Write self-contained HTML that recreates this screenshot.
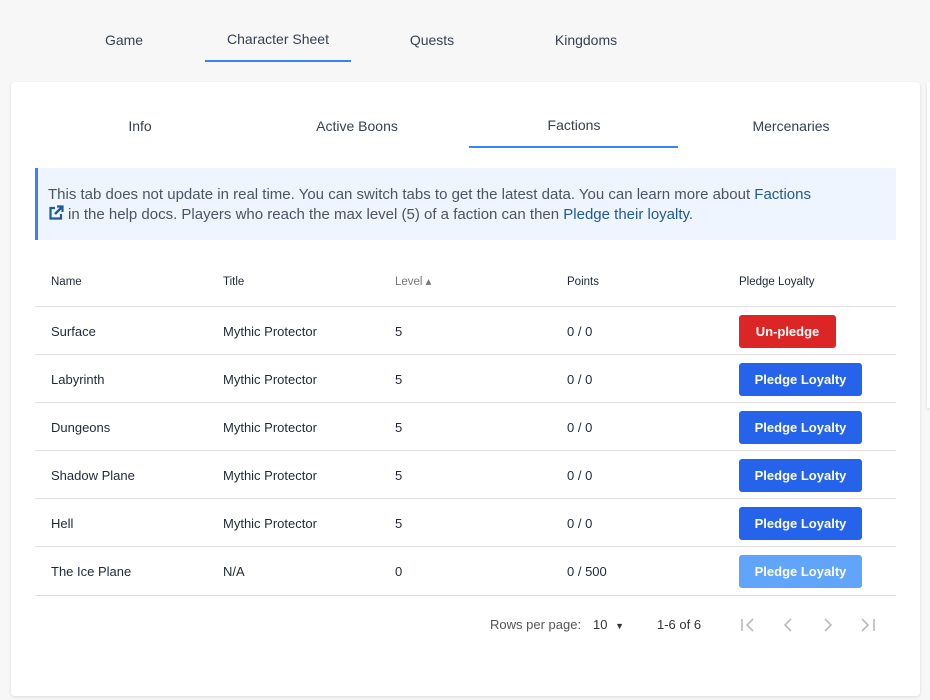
<!DOCTYPE html>
<html><head><style>
*{box-sizing:border-box;margin:0;padding:0}
body{width:930px;height:700px;background:#f7f7f7;font-family:"Liberation Sans",sans-serif;color:#374151;position:relative;overflow:hidden}
.abs{position:absolute}
.tt{position:absolute;font-size:14px;color:#374151;transform:translateX(-50%);white-space:nowrap}
.card{position:absolute;left:11px;top:82px;width:909px;height:614px;background:#fff;border-radius:4px;box-shadow:0 1px 3px rgba(0,0,0,.12)}
.side{position:absolute;left:927px;top:82px;width:10px;height:326px;background:#fff;box-shadow:0 1px 3px rgba(0,0,0,.12)}
.alert{position:absolute;left:35px;top:168px;width:861px;height:72px;background:#eef5fe;border-left:3px solid #3b82f6;padding:17px 0 0 10px;font-size:15px;line-height:20px;color:#4b5563}
.alert a{color:#1e5a96;text-decoration:none}
.row{position:absolute;left:35px;width:861px;height:48px;border-bottom:1px solid #e0e0e0;font-size:13px;color:#1f2937}
.row span{position:absolute;top:17px}
.hd span{font-size:11.5px;color:#1f2937;line-height:14px;top:16px}
.btn{position:absolute;top:8px;height:33px;border-radius:3px;color:#fff;font-weight:bold;font-size:13px;text-align:center;line-height:33px;left:704px}
.pg{position:absolute;top:617px;font-size:13px;color:#555}
</style></head><body>
<div class="tt" style="left:124px;top:32px">Game</div>
<div class="tt" style="left:278px;top:31px">Character Sheet</div>
<div class="abs" style="left:205px;top:60px;width:146px;height:2px;background:#3b82f6"></div>
<div class="tt" style="left:432px;top:32px">Quests</div>
<div class="tt" style="left:586px;top:32px">Kingdoms</div>
<div class="side"></div>
<div class="card"></div>
<div class="tt" style="left:140px;top:118px">Info</div>
<div class="tt" style="left:357px;top:118px">Active Boons</div>
<div class="tt" style="left:574px;top:117px">Factions</div>
<div class="abs" style="left:469px;top:146px;width:209px;height:2px;background:#3b82f6"></div>
<div class="tt" style="left:791px;top:118px">Mercenaries</div>
<div class="alert">This tab does not update in real time. You can switch tabs to get the latest data. You can learn more about <a>Factions</a><br><svg width="16" height="16" viewBox="0 0 16 16" style="vertical-align:-2px;margin-right:4px"><path d="M7 3H2.5v10.5H13V9" fill="none" stroke="#1e5a96" stroke-width="2.2"/><path d="M9 1.5h5.5V7" fill="none" stroke="#1e5a96" stroke-width="2.2"/><path d="M14 2L7 9" stroke="#1e5a96" stroke-width="2.4"/></svg>in the help docs. Players who reach the max level (5) of a faction can then <a>Pledge their loyalty</a>.</div>
<div class="row hd" style="top:259px"><span style="left:16px">Name</span><span style="left:188px">Title</span><span style="left:360px;color:#777">Level ▴</span><span style="left:532px">Points</span><span style="left:704px">Pledge Loyalty</span></div>
<div class="row" style="top:307px"><span style="left:16px">Surface</span><span style="left:188px">Mythic Protector</span><span style="left:360px">5</span><span style="left:532px">0 / 0</span><div class="btn" style="width:97px;background:#dc2626">Un-pledge</div></div>
<div class="row" style="top:355px"><span style="left:16px">Labyrinth</span><span style="left:188px">Mythic Protector</span><span style="left:360px">5</span><span style="left:532px">0 / 0</span><div class="btn" style="width:123px;background:#2563eb">Pledge Loyalty</div></div>
<div class="row" style="top:403px"><span style="left:16px">Dungeons</span><span style="left:188px">Mythic Protector</span><span style="left:360px">5</span><span style="left:532px">0 / 0</span><div class="btn" style="width:123px;background:#2563eb">Pledge Loyalty</div></div>
<div class="row" style="top:451px"><span style="left:16px">Shadow Plane</span><span style="left:188px">Mythic Protector</span><span style="left:360px">5</span><span style="left:532px">0 / 0</span><div class="btn" style="width:123px;background:#2563eb">Pledge Loyalty</div></div>
<div class="row" style="top:499px"><span style="left:16px">Hell</span><span style="left:188px">Mythic Protector</span><span style="left:360px">5</span><span style="left:532px">0 / 0</span><div class="btn" style="width:123px;background:#2563eb">Pledge Loyalty</div></div>
<div class="row" style="top:547px;height:49px"><span style="left:16px">The Ice Plane</span><span style="left:188px">N/A</span><span style="left:360px">0</span><span style="left:532px">0 / 500</span><div class="btn" style="width:123px;background:#60a5fa">Pledge Loyalty</div></div>
<div class="pg" style="left:490px">Rows per page:</div>
<div class="pg" style="left:593px;color:#333">10 <span style="font-size:9px;margin-left:4px">▼</span></div>
<div class="pg" style="left:657px;color:#333">1-6 of 6</div>
<svg class="abs" style="left:736px;top:614px" width="150" height="22" viewBox="0 0 150 22"><g fill="none" stroke="#bbb" stroke-width="1.6"><path d="M6 5v12M17 5l-6 6 6 6"/><path d="M55 5l-6 6 6 6"/><path d="M89 5l6 6-6 6"/><path d="M126 5l6 6-6 6M138 5v12"/></g></svg>
</body></html>
